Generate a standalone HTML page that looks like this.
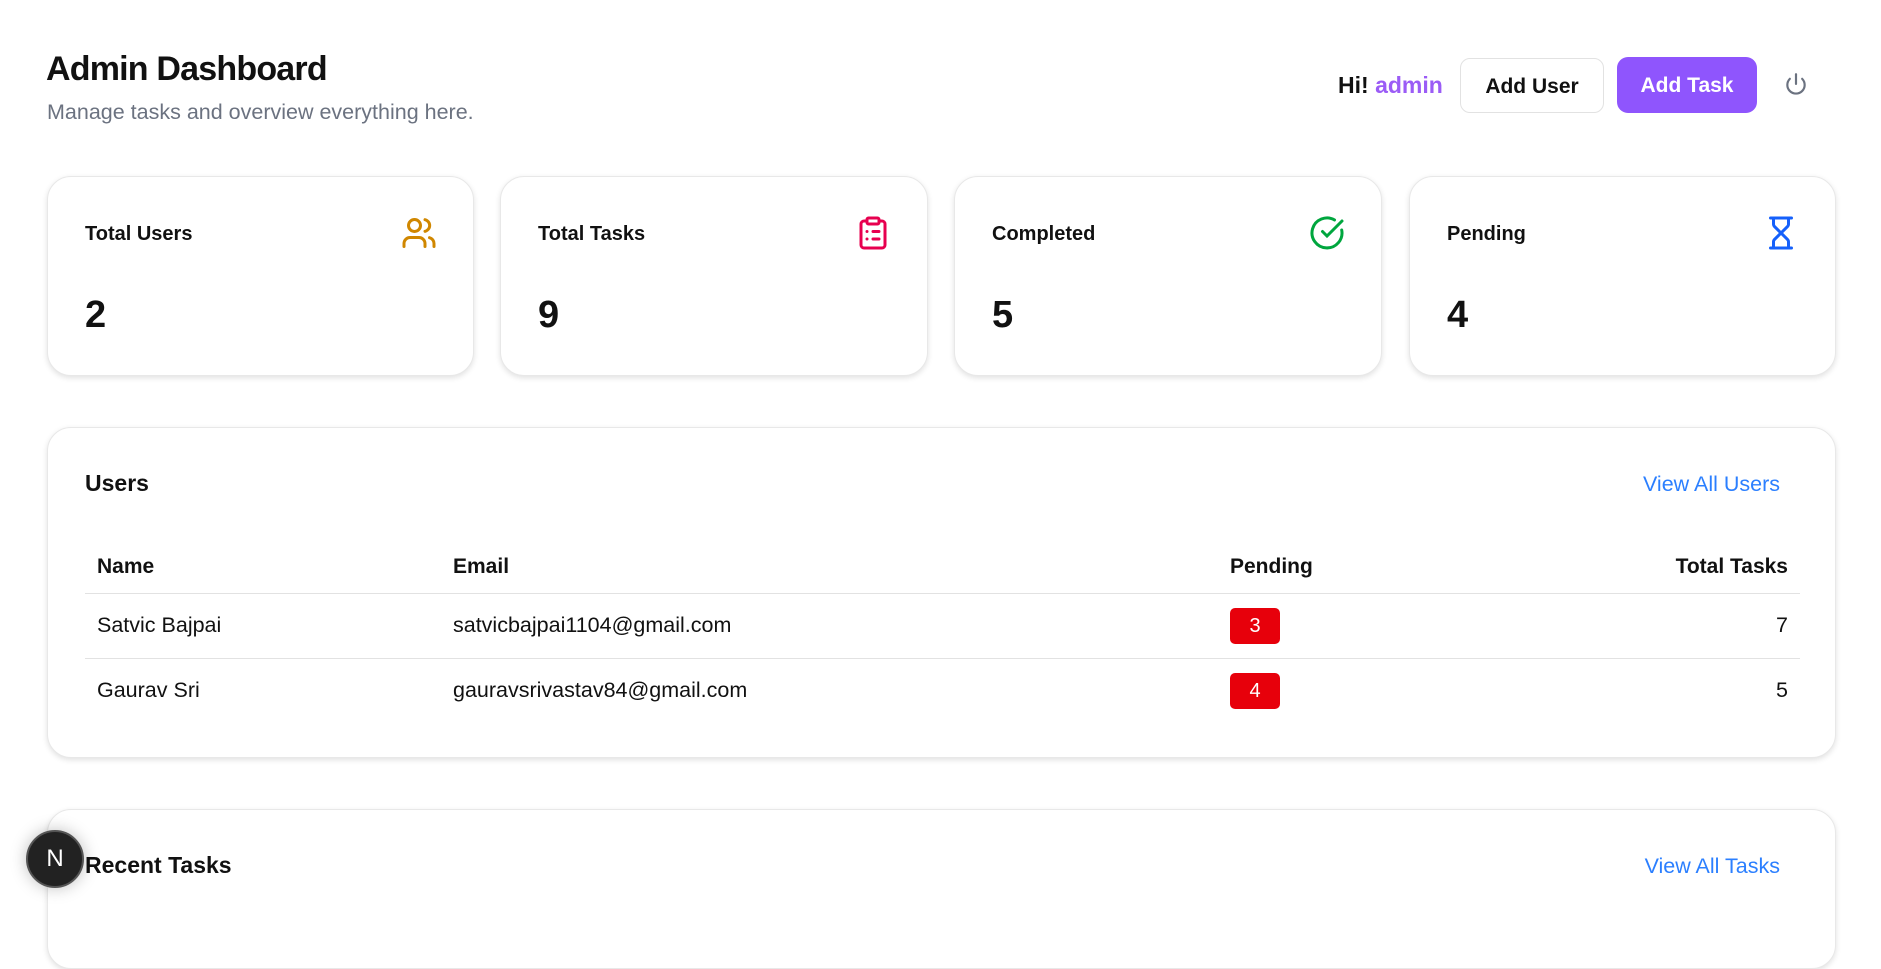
<!DOCTYPE html>
<html><head><meta charset="utf-8"><style>
*{box-sizing:border-box;margin:0;padding:0}
body{width:1881px;height:911px;overflow:hidden;background:#fff;font-family:"Liberation Sans",sans-serif;color:#111;position:relative}
.a{position:absolute}
.card{position:absolute;background:#fff;border:1px solid #e8e8e8;border-radius:24px;box-shadow:0 2px 6px rgba(0,0,0,.12)}
.lbl{position:absolute;left:37px;top:46px;font-size:20px;font-weight:600}
.num{position:absolute;left:37px;top:117px;font-size:38px;font-weight:700}
.ic{position:absolute;right:36px;top:38px;width:36px;height:36px}
th,td{font-size:21.5px;text-align:left;padding:0 12px}
th{font-size:21px}
.badge{display:inline-block;background:#e7000b;color:#fff;border-radius:5px;width:50px;height:36px;line-height:36px;text-align:center;font-size:20px}
</style></head><body>
<div class="a" style="left:46px;top:50px;font-size:34px;font-weight:600;letter-spacing:-0.8px">Admin Dashboard</div>
<div class="a" style="left:47px;top:100px;font-size:21.5px;color:#6b7280">Manage tasks and overview everything here.</div>
<div class="a" style="left:1338px;top:72px;font-size:23px;font-weight:600">Hi! <span style="color:#9b5cf6">admin</span></div>
<div class="a" style="left:1460px;top:58px;width:144px;height:55px;border:1px solid #e2e2e2;border-radius:10px;font-size:21px;font-weight:600;text-align:center;line-height:55px">Add User</div>
<div class="a" style="left:1617px;top:57px;width:140px;height:56px;background:#8f55fd;border-radius:11px;color:#fff;font-size:21px;font-weight:600;text-align:center;line-height:58px">Add Task</div>
<svg class="a" style="left:1783px;top:72px" width="26" height="26" viewBox="0 0 24 24" fill="none" stroke="#6b7280" stroke-width="2" stroke-linecap="round"><path d="M12 2v9"/><path d="M6.3 6.3a8 8 0 1 0 11.4 0"/></svg>

<div class="card" style="left:47px;top:176px;width:427px;height:200px"><div class="lbl">Total Users</div><div class="num">2</div>
<svg class="ic" viewBox="0 0 24 24" fill="none" stroke="#d08700" stroke-width="2" stroke-linecap="round"><circle cx="9" cy="7" r="4"/><path d="M2 21v-2a4 4 0 0 1 4-4h6a4 4 0 0 1 4 4v2"/><path d="M16 3.1a4 4 0 0 1 0 7.8"/><path d="M22 21v-2a4 4 0 0 0-3-3.9"/></svg></div>
<div class="card" style="left:500px;top:176px;width:428px;height:200px"><div class="lbl">Total Tasks</div><div class="num">9</div>
<svg class="ic" viewBox="0 0 24 24" fill="none" stroke="#e7004f" stroke-width="2" stroke-linecap="round"><rect x="8" y="2" width="8" height="4" rx="1"/><path d="M16 4h2a2 2 0 0 1 2 2v14a2 2 0 0 1-2 2H6a2 2 0 0 1-2-2V6a2 2 0 0 1 2-2h2"/><path d="M12 11h4M12 16h4M8 11h.01M8 16h.01"/></svg></div>
<div class="card" style="left:954px;top:176px;width:428px;height:200px"><div class="lbl">Completed</div><div class="num">5</div>
<svg class="ic" viewBox="0 0 24 24" fill="none" stroke="#00a63e" stroke-width="2" stroke-linecap="round"><path d="M21.8 10A10 10 0 1 1 17 3.3"/><path d="m9 11 3 3L22 4"/></svg></div>
<div class="card" style="left:1409px;top:176px;width:427px;height:200px"><div class="lbl">Pending</div><div class="num">4</div>
<svg class="ic" viewBox="0 0 24 24" fill="none" stroke="#1560fb" stroke-width="2" stroke-linecap="round"><path d="M5 22h14M5 2h14"/><path d="M17 22v-4.2a2 2 0 0 0-.6-1.4L12 12l-4.4 4.4a2 2 0 0 0-.6 1.4V22"/><path d="M7 2v4.2a2 2 0 0 0 .6 1.4L12 12l4.4-4.4a2 2 0 0 0 .6-1.4V2"/></svg></div>

<div class="card" style="left:47px;top:427px;width:1789px;height:331px">
<div class="a" style="left:37px;top:42px;font-size:23px;font-weight:600">Users</div>
<div class="a" style="right:55px;top:44px;font-size:21.5px;color:#2b7fff">View All Users</div>
<table class="a" style="left:37px;top:118px;width:1715px;border-collapse:collapse">
<tr style="height:47px;border-bottom:1px solid #e2e2e2"><th style="width:356px;font-weight:600;vertical-align:top;padding-top:9px">Name</th><th style="width:777px;font-weight:600;vertical-align:top;padding-top:9px">Email</th><th style="font-weight:600;vertical-align:top;padding-top:9px">Pending</th><th style="text-align:right;font-weight:600;vertical-align:top;padding-top:9px">Total Tasks</th></tr>
<tr style="height:65px;border-bottom:1px solid #e2e2e2"><td>Satvic Bajpai</td><td>satvicbajpai1104@gmail.com</td><td><span class="badge">3</span></td><td style="text-align:right">7</td></tr>
<tr style="height:65px"><td>Gaurav Sri</td><td>gauravsrivastav84@gmail.com</td><td><span class="badge">4</span></td><td style="text-align:right">5</td></tr>
</table></div>

<div class="card" style="left:47px;top:809px;width:1789px;height:160px">
<div class="a" style="left:37px;top:42px;font-size:23px;font-weight:600">Recent Tasks</div>
<div class="a" style="right:55px;top:44px;font-size:21.5px;color:#2b7fff">View All Tasks</div></div>
<div class="a" style="left:26px;top:830px;width:58px;height:58px;border-radius:50%;background:#222;border:2px solid #555;box-shadow:0 0 16px rgba(0,0,0,.25);color:#fff;font-size:24px;text-align:center;line-height:54px">N</div>
</body></html>
